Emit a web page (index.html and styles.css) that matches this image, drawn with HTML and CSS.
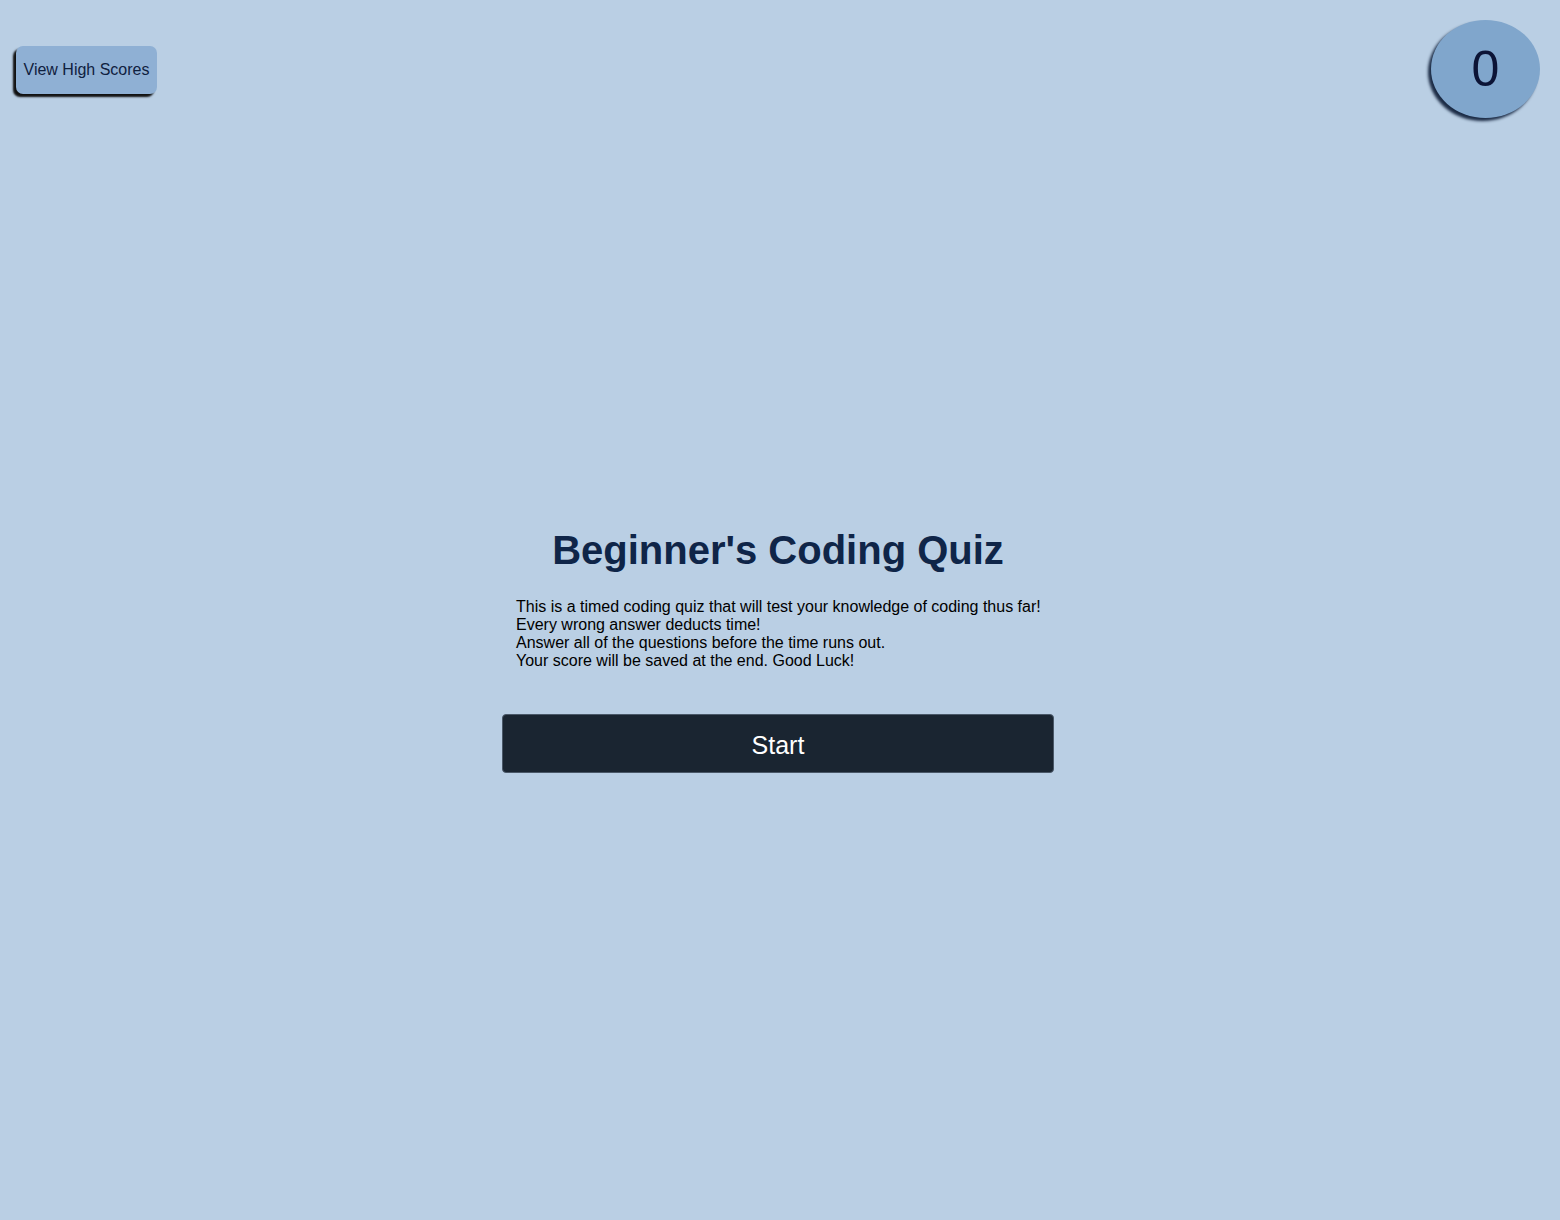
FILE: index.html
```html
<!DOCTYPE html>
<html>
<head>
<meta charset="utf-8">
<link rel="stylesheet" href="styles.css">
</head>
<body>
<header class="top">
  <button class="scores-btn">View High Scores</button>
  <div class="timer">0</div>
</header>
<main class="quiz">
  <h1 class="title">Beginner's Coding Quiz</h1>
  <p class="intro">This is a timed coding quiz that will test your knowledge of coding thus far!<br>Every wrong answer deducts time!<br>Answer all of the questions before the time runs out.<br>Your score will be saved at the end. Good Luck!</p>
  <button class="start-btn">Start</button>
</main>
</body>
</html>
```

FILE: styles.css
```css
html, body {
  margin: 0;
  padding: 0;
}
body {
  background: #bacfe4;
  font-family: "Liberation Sans", Arial, sans-serif;
  width: 1560px;
  height: 1220px;
  overflow: hidden;
}
.top {
  display: flex;
  justify-content: space-between;
  align-items: flex-start;
  padding: 20px 20px 0 16px;
}
.scores-btn {
  margin-top: 26px;
  width: 141px;
  height: 48px;
  background: #8fb0d4;
  border: none;
  border-radius: 7px;
  box-shadow: -3px 3px 2px #111;
  color: #0f2140;
  font-family: "Liberation Sans", Arial, sans-serif;
  font-size: 16px;
  padding: 0;
}
.timer {
  width: 109px;
  height: 98px;
  border-radius: 50%;
  background: #80a6cc;
  box-shadow: -3px 3px 3px #1b2b45;
  color: #0c1436;
  font-size: 50px;
  display: flex;
  align-items: center;
  justify-content: center;
}
.quiz {
  width: 552px;
  margin: 408px 0 0 502px;
  display: flex;
  flex-direction: column;
  align-items: stretch;
}
.title {
  margin: 0;
  text-align: center;
  color: #0f2548;
  font-size: 40px;
  line-height: 48px;
  font-weight: bold;
}
.intro {
  margin: 24px 0 0;
  padding: 0 0 0 14px;
  font-size: 16px;
  line-height: 18px;
  color: #000;
  white-space: nowrap;
}
.start-btn {
  margin-top: 44px;
  height: 59px;
  padding: 3px 0 0;
  background: #1a2531;
  color: #fff;
  border: 1px solid #4a5868;
  border-radius: 4px;
  font-family: "Liberation Sans", Arial, sans-serif;
  font-size: 25px;
}
```
